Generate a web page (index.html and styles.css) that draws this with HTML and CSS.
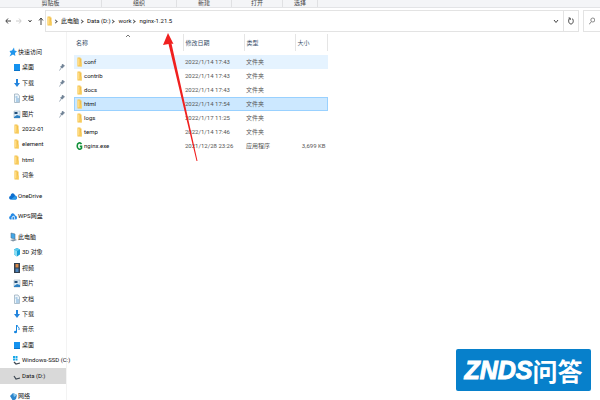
FILE: index.html
```html
<!DOCTYPE html>
<html lang="zh-CN">

<head>
    <meta charset="UTF-8">
    <title>nginx-1.21.5</title>
    <link rel="stylesheet" href="styles.css">
</head>

<body>
    <!-- 公用图标 -->
    <svg class="sprite" aria-hidden="true">
        <symbol id="folder" viewBox="0 0 8 10"><path d="M1.500 0.500h3v1h1v8h-4z" fill="#f3c14b"/><path d="M1.500 1.500h2v7h-2z" fill="#ffdc85"/><path d="M4.500 5.500h1.500v4h-1.500z" fill="#f9d370"/></symbol>
        <symbol id="pin" viewBox="0 0 8 10"><path d="M5 .5l.5 3 2.500.8L6 6l.3 3L4 7.500.5 9.500 2 6.500.5 4l2.500-.5z" fill="#2196ec"/></symbol>
        <symbol id="desktop" viewBox="0 0 8 10"><path d="M1 2h6v7H1z" fill="#1492ef"/><path d="M1 8h6v1H1z" fill="#0873c9"/></symbol>
        <symbol id="down" viewBox="0 0 8 10"><path d="M3 1h2v4h2L4 9 1 5h2z" fill="#2384dd"/></symbol>
        <symbol id="doc" viewBox="0 0 8 10"><path d="M1.500 1h3.500l1.500 2v6.500h-5z" fill="#eef5fa" stroke="#91a6b8" stroke-width=".7"/><path d="M2.500 4h2M3 6h3M3 8h3" stroke="#4e95ce" stroke-width=".8"/></symbol>
        <symbol id="pic" viewBox="0 0 8 10"><path d="M1 2h6v7H1z" fill="#dcebf6" stroke="#92a6b6" stroke-width=".5"/><path d="M1.500 3h3v2h-3z" fill="#244f79"/><path d="M1 8l3-2 3 1v2H1z" fill="#2d80c2"/></symbol>
        <symbol id="cloud" viewBox="0 0 8 10"><path d="M2 8.500C-.5 8.500-.3 5 1.500 5 2 1.500 5 1.500 6 4.500c2.500 0 2.500 4 .5 4z" fill="#0d6fd0"/><path d="M2 8.500L6 5c2 0 2 3.500.5 3.500z" fill="#2d9be8"/></symbol>
        <symbol id="wps" viewBox="0 0 8 10"><path d="M1.500 8.500C-.5 8 0 5 1.500 5 2 1.500 5 1.500 6 4.500c2.500 0 2.500 4 .5 4z" fill="#2389e5"/><path d="M3 9V6l2-1 1 4" fill="none" stroke="#fff" stroke-width=".8"/></symbol>
        <symbol id="pc" viewBox="0 0 8 10"><path d="M2 1l4 1v5L2 6z" fill="#42a7e8" stroke="#52738f" stroke-width=".6"/><path d="M1 8l5-1 2 1-4 1.500z" fill="#8395a5"/></symbol>
        <symbol id="cube" viewBox="0 0 8 10"><path d="M1 2.500L4 1l3 1.500v5L4 9.500l-3-2z" fill="#18a0d8"/><path d="M1 2.500L4 4v5.500l-3-2z" fill="#8bdcf2"/><path d="M1 2.500L4 1l3 1.500L4 4z" fill="#5ccbee"/></symbol>
        <symbol id="video" viewBox="0 0 8 10"><path d="M1 0h6v10H1z" fill="#34404e"/><path d="M2.500 1h3v3.500h-3z" fill="#d7894a"/><path d="M2.500 5.500h3V9h-3z" fill="#4b83bb"/></symbol>
        <symbol id="music" viewBox="0 0 8 10"><path d="M3.500 1v7" stroke="#1685df"/><path d="M4 1c0 2 3 2 2 5" fill="none" stroke="#1685df"/><ellipse cx="2.500" cy="8" rx="1.500" ry="1.300" fill="#1685df"/></symbol>
        <symbol id="ssd" viewBox="0 0 8 10"><path d="M0 1h2v2H0zM2.500 1h2v2h-2zM0 3.500h2v2H0zM2.500 3.500h2v2h-2z" fill="#19a8e8"/><path d="M1 7l2 2 4-1" fill="none" stroke="#3c4650" stroke-width="1.200"/></symbol>
        <symbol id="disk" viewBox="0 0 8 10"><path d="M1 5l2 3 4-1" fill="none" stroke="#3c4650" stroke-width="1.200"/></symbol>
        <symbol id="net" viewBox="0 0 8 10"><path d="M1 5l3-3 4 2-1 4-3 2z" fill="#2d86cc"/><path d="M4 2l4 2-3 2z" fill="#8bc8ec"/></symbol>
        <symbol id="tack" viewBox="0 0 6 8"><path d="M3.500 1l2 2-1 .5L3.500 5 1.500 4 3 2.500zM2.500 4.500L.5 7.500" fill="#6d8093" stroke="#6d8093" stroke-width=".7"/></symbol>
    </svg>

    <div class="ribbon">
        <span class="group clip">剪贴板</span>
        <span class="group organize">组织</span>
        <span class="group new">新建</span>
        <span class="group">打开</span>
        <span class="group select">选择</span>
    </div>

    <div class="toolbar">
        <div class="arrows">
            <button aria-label="后退"><svg viewBox="0 0 6 8"><path d="M6 4H1M3 1.500L.8 4 3 6.500"/></svg></button>
            <button class="off" aria-label="前进"><svg viewBox="0 0 6 8"><path d="M0 4h5M3 1.500L5.200 4 3 6.500"/></svg></button>
            <button aria-label="历史"><svg viewBox="0 0 6 8"><path d="M1.500 3L3 5l1.500-2"/></svg></button>
            <button aria-label="向上"><svg viewBox="0 0 6 8"><path d="M3 8V1M1 3.500L3 1l2 2.500"/></svg></button>
        </div>
        <div class="address">
            <svg class="icon"><use href="#folder"/></svg>
            <i class="sep"></i><a href="#">此电脑</a>
            <i class="sep"></i><a href="#">Data (D:)</a>
            <i class="sep"></i><a href="#">work</a>
            <i class="sep"></i><a href="#">nginx-1.21.5</a>
            <button class="drop" aria-label="展开"><svg viewBox="0 0 6 8"><path d="M1 3l2 2.500L5 3"/></svg></button>
            <button class="refresh" aria-label="刷新"><svg viewBox="0 0 6 8"><path d="M4 1.500c2 1 1.500 5.500-1 5.500S0 3 1.500 1.500M.5 1h1.700v2"/></svg></button>
        </div>
        <button class="search" aria-label="搜索"><svg viewBox="0 0 6 8"><circle cx="3.800" cy="3" r="2"/><path d="M2.500 4.500L0 7.500"/></svg></button>
    </div>

    <div class="main">
        <ul class="side">
            <li class="top"><svg class="icon"><use href="#pin"/></svg><a href="#">快速访问</a></li>
            <li><svg class="icon"><use href="#desktop"/></svg><a href="#">桌面</a><svg class="tack"><use href="#tack"/></svg></li>
            <li><svg class="icon"><use href="#down"/></svg><a href="#">下载</a><svg class="tack"><use href="#tack"/></svg></li>
            <li><svg class="icon"><use href="#doc"/></svg><a href="#">文档</a><svg class="tack"><use href="#tack"/></svg></li>
            <li><svg class="icon"><use href="#pic"/></svg><a href="#">图片</a><svg class="tack"><use href="#tack"/></svg></li>
            <li><svg class="icon"><use href="#folder"/></svg><a href="#">2022-01</a></li>
            <li><svg class="icon"><use href="#folder"/></svg><a href="#">element</a></li>
            <li><svg class="icon"><use href="#folder"/></svg><a href="#">html</a></li>
            <li><svg class="icon"><use href="#folder"/></svg><a href="#">词条</a></li>
            <li class="top"><svg class="icon"><use href="#cloud"/></svg><a href="#">OneDrive</a></li>
            <li class="top"><svg class="icon"><use href="#wps"/></svg><a href="#">WPS网盘</a></li>
            <li class="top"><svg class="icon"><use href="#pc"/></svg><a href="#">此电脑</a></li>
            <li><svg class="icon"><use href="#cube"/></svg><a href="#">3D 对象</a></li>
            <li><svg class="icon"><use href="#video"/></svg><a href="#">视频</a></li>
            <li><svg class="icon"><use href="#pic"/></svg><a href="#">图片</a></li>
            <li><svg class="icon"><use href="#doc"/></svg><a href="#">文档</a></li>
            <li><svg class="icon"><use href="#down"/></svg><a href="#">下载</a></li>
            <li><svg class="icon"><use href="#music"/></svg><a href="#">音乐</a></li>
            <li><svg class="icon"><use href="#desktop"/></svg><a href="#">桌面</a></li>
            <li><svg class="icon"><use href="#ssd"/></svg><a href="#">Windows-SSD (C:)</a></li>
            <li class="current"><svg class="icon"><use href="#disk"/></svg><a href="#">Data (D:)</a></li>
            <li class="top"><svg class="icon"><use href="#net"/></svg><a href="#">网络</a></li>
        </ul>

        <div class="files">
            <table>
                <colgroup><col class="name"><col class="date"><col class="type"><col class="size"></colgroup>
                <thead>
                    <tr>
                        <th>名称<svg class="sort" viewBox="0 0 6 4"><path d="M1 3l2-2 2 2"/></svg></th>
                        <th>修改日期</th>
                        <th>类型</th>
                        <th>大小</th>
                    </tr>
                </thead>
                <tbody>
                    <tr class="hover"><td><svg class="icon"><use href="#folder"/></svg>conf</td><td>2022/1/14 17:43</td><td>文件夹</td><td></td></tr>
                    <tr><td><svg class="icon"><use href="#folder"/></svg>contrib</td><td>2022/1/14 17:43</td><td>文件夹</td><td></td></tr>
                    <tr><td><svg class="icon"><use href="#folder"/></svg>docs</td><td>2022/1/14 17:43</td><td>文件夹</td><td></td></tr>
                    <tr class="selected"><td><svg class="icon"><use href="#folder"/></svg>html</td><td>2022/1/14 17:54</td><td>文件夹</td><td></td></tr>
                    <tr><td><svg class="icon"><use href="#folder"/></svg>logs</td><td>2022/1/17 11:25</td><td>文件夹</td><td></td></tr>
                    <tr><td><svg class="icon"><use href="#folder"/></svg>temp</td><td>2022/1/14 17:46</td><td>文件夹</td><td></td></tr>
                    <tr><td><svg class="icon" viewBox="0 0 8 10"><path d="M5.500 3.200C4.200 1 1.200 1.800 1.200 5s2.800 4 4.300 2.300V5.400H3.800" fill="none" stroke="#12923a" stroke-width="1.600"/></svg>nginx.exe</td><td>2021/12/28 23:26</td><td>应用程序</td><td>3,699 KB</td></tr>
                </tbody>
            </table>
        </div>
    </div>

    <!-- 红色箭头标注 -->
    <svg class="mark" viewBox="0 0 36 130" aria-hidden="true"><path d="M5 0l5.500 11-2-.5L34.500 128h-1L5.500 11 0 12z" fill="#f0201f"/></svg>

    <div class="logo"><b>ZNDS</b><span>问答</span></div>
</body>

</html>
```

FILE: styles.css
```css
* {
    padding: 0;
    margin: 0;
    list-style: none;
    border: 0;
    box-sizing: border-box;
}

body {
    display: flex;
    flex-direction: column;
    height: 100vh;
    overflow: hidden;
    position: relative;
    background: #fff;
    color: #111;
    font: 6px/8px Roboto, "Noto Sans CJK SC", sans-serif;
}

a {
    color: inherit;
    text-decoration: none;
    white-space: nowrap;
}

button {
    background: none;
    display: flex;
    align-items: center;
    justify-content: center;
}

.sprite {
    display: none;
}

.icon {
    width: 8px;
    height: 10px;
    flex: none;
}

/* 顶部功能区 */
.ribbon {
    display: flex;
    height: 8px;
    flex: none;
    background: #f4f5f7;
    border-bottom: 1px solid #e3e4e6;
    color: #444;
}

.group {
    width: 51px;
    height: 7px;
    line-height: 6px;
    text-align: center;
    border-right: 1px solid #e0e1e3;
}

.group.clip {
    width: 102px;
}

.group.organize {
    width: 75px;
}

.group.new {
    width: 55px;
}

.group.select {
    width: 35px;
}

/* 地址栏 */
.toolbar {
    display: flex;
    flex: none;
    height: 22px;
    margin-top: 2px;
}

.arrows {
    display: flex;
    align-items: center;
    width: 45px;
    padding-left: 5px;
    gap: 5px;
}

.toolbar button svg {
    width: 6px;
    height: 8px;
    fill: none;
    stroke: #444;
    stroke-width: 1;
}

.toolbar .off svg {
    stroke: #ccc;
}

.address {
    flex: 1;
    display: flex;
    align-items: center;
    border: 1px solid #e3e3e3;
    background: #fff;
}

.sep {
    width: 3px;
    height: 3px;
    margin-right: 4px;
    border: solid #555;
    border-width: 1px 1px 0 0;
    transform: rotate(45deg);
}

.address a {
    margin-right: 1px;
}

.drop {
    width: 14px;
    margin-left: auto;
}

.refresh {
    width: 15px;
    height: 20px;
    border-left: 1px solid #e3e3e3;
}

.search {
    width: 17px;
    margin-left: 4px;
    border: 1px solid #e3e3e3;
    border-right: 0;
}

.toolbar .search svg {
    stroke: #888;
}

.main {
    flex: 1;
    display: flex;
    min-height: 0;
}

/* 左侧导航，底部最后一行略超出窗口 */
.side {
    width: 67px;
    flex: none;
    display: flex;
    flex-direction: column;
    padding-top: 12px;
    margin-bottom: -4px;
    border-right: 1px solid #f3f3f3;
}

.side li {
    flex: 1;
    min-height: 0;
    display: flex;
    align-items: center;
    gap: 1px;
    padding-left: 13px;
}

.side li.top {
    padding-left: 9px;
    margin-top: 5px;
}

.side li.top:first-child {
    margin-top: 0;
}

.side li.current {
    background: #d9d9d9;
}

.tack {
    width: 6px;
    height: 8px;
    margin-left: auto;
    margin-right: 1px;
}

/* 文件列表 */
.files {
    flex: 1;
    padding: 2px 0 0 7px;
}

table {
    width: 254px;
    table-layout: fixed;
    border-collapse: collapse;
}

col.name {
    width: 109px;
}

col.date {
    width: 61px;
}

col.type {
    width: 51px;
}

th {
    height: 17px;
    padding-left: 2px;
    font-weight: normal;
    text-align: left;
    color: #3c506a;
    border-right: 1px solid #e5e5e5;
    position: relative;
}

.sort {
    position: absolute;
    top: 0;
    left: 50%;
    margin-left: -3px;
    width: 6px;
    height: 4px;
    fill: none;
    stroke: #777;
    stroke-width: 1;
}

thead::after {
    content: "";
    display: block;
    height: 4px;
}

td {
    height: 14px;
    padding-left: 2px;
    color: #555;
    white-space: nowrap;
}

td:first-child {
    color: #111;
}

td:last-child {
    text-align: right;
    padding-right: 2px;
}

td .icon {
    vertical-align: middle;
}

tr.hover {
    background: #e5f3ff;
}

tr.selected {
    background: #cce8ff;
    outline: 1px solid #99d1ff;
    outline-offset: -1px;
}

/* 标注和角标浮在内容上面 */
.mark {
    position: absolute;
    left: 163px;
    top: 33px;
    width: 36px;
    height: 130px;
}

.logo {
    position: absolute;
    right: 9px;
    bottom: 9px;
    width: 135px;
    height: 42px;
    display: flex;
    align-items: center;
    justify-content: center;
    border-radius: 2px;
    background: #0780cb;
    color: #fff;
}

.logo b {
    font: italic bold 25px/26px "Liberation Sans", sans-serif;
    -webkit-text-stroke: 1px #fff;
}

.logo span {
    font: bold 25px/26px "Noto Sans CJK SC", sans-serif;
}
```
